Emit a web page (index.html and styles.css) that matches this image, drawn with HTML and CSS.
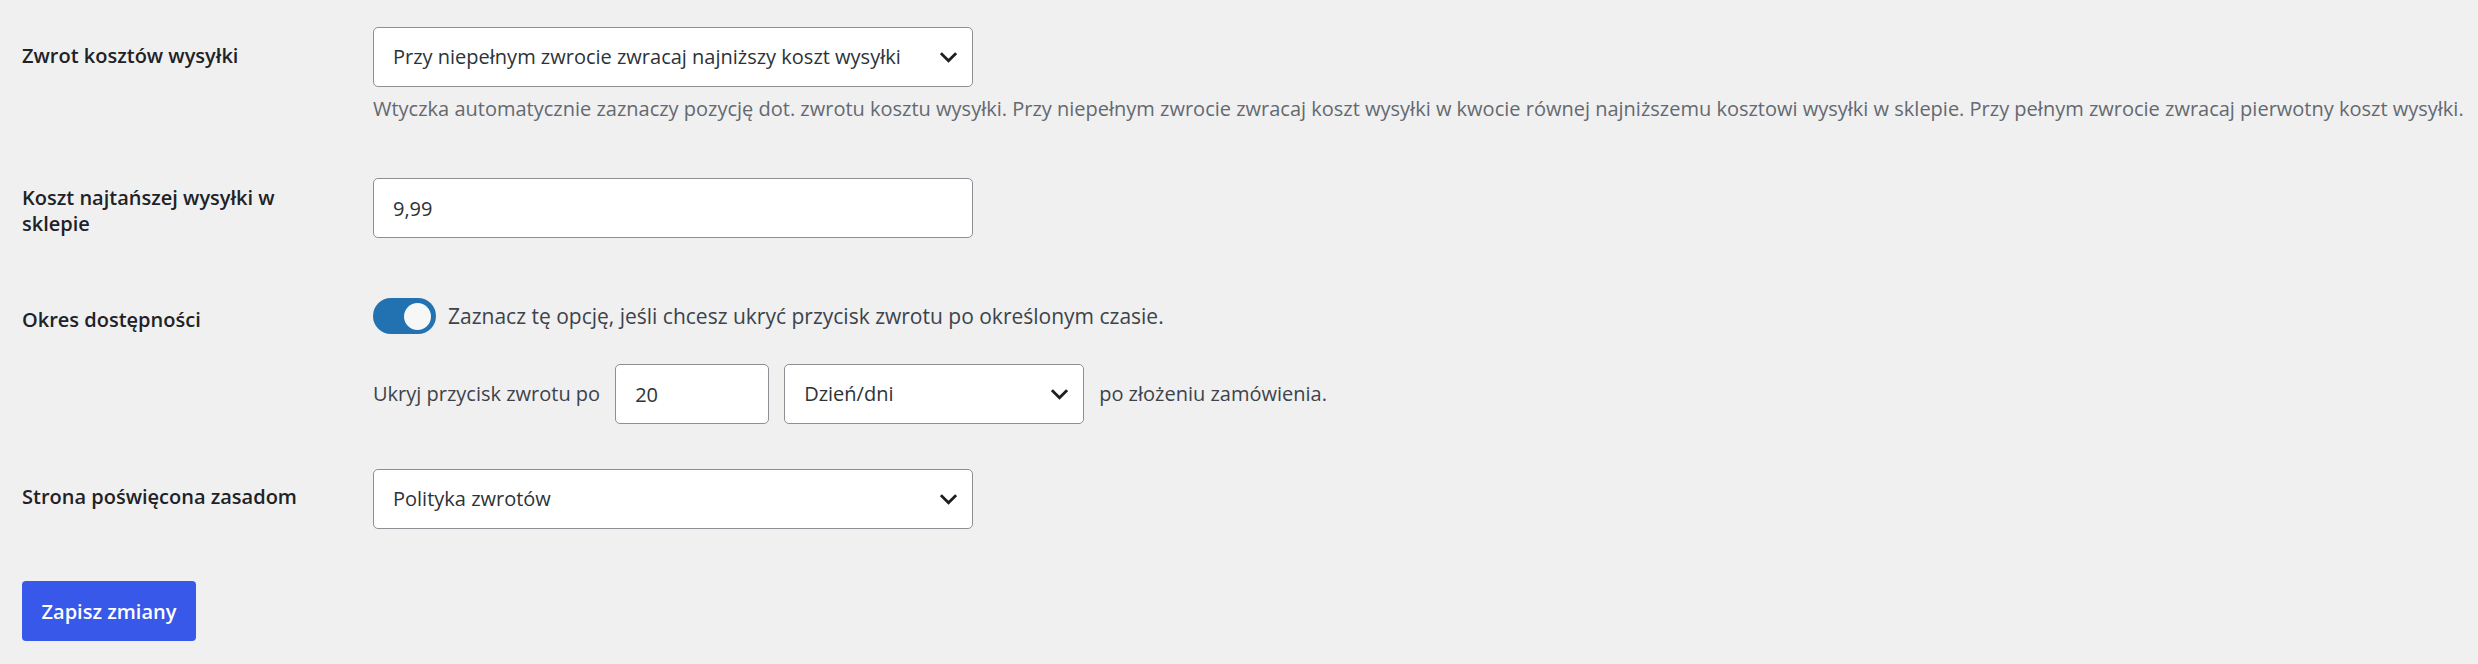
FILE: index.html
```html
<!DOCTYPE html>
<html lang="pl">
<head>
<meta charset="utf-8">
<title>Ustawienia zwrotów</title>
<link rel="stylesheet" href="styles.css">
</head>
<body>
<form class="settings">
  <div class="row row-shipping">
    <label class="label" for="refund-cost">Zwrot kosztów wysyłki</label>
    <div class="field">
      <div class="select-wrap select-wide">
        <select id="refund-cost" class="select">
          <option>Przy niepełnym zwrocie zwracaj najniższy koszt wysyłki</option>
        </select>
        <svg class="chevron" viewBox="0 0 18 11" aria-hidden="true"><polyline points="2,2 9,9 16,2"/></svg>
      </div>
      <p class="desc">Wtyczka automatycznie zaznaczy pozycję dot. zwrotu kosztu wysyłki. Przy niepełnym zwrocie zwracaj koszt wysyłki w kwocie równej najniższemu kosztowi wysyłki w sklepie. Przy pełnym zwrocie zwracaj pierwotny koszt wysyłki.</p>
    </div>
  </div>

  <div class="row row-cost">
    <label class="label label-cost" for="cheapest">Koszt najtańszej wysyłki w sklepie</label>
    <div class="field">
      <input id="cheapest" class="input input-wide" type="text" value="9,99">
    </div>
  </div>

  <div class="row row-period">
    <label class="label label-period" for="period">Okres dostępności</label>
    <div class="field">
      <div class="toggle-line">
        <span class="switch" role="switch" aria-checked="true" id="period"><span class="knob"></span></span>
        <span class="toggle-text">Zaznacz tę opcję, jeśli chcesz ukryć przycisk zwrotu po określonym czasie.</span>
      </div>
      <div class="period-line">
        <span class="inline-text">Ukryj przycisk zwrotu po</span>
        <input class="input input-num" type="text" value="20">
        <div class="select-wrap select-unit">
          <select class="select">
            <option>Dzień/dni</option>
          </select>
          <svg class="chevron" viewBox="0 0 18 11" aria-hidden="true"><polyline points="2,2 9,9 16,2"/></svg>
        </div>
        <span class="inline-text">po złożeniu zamówienia.</span>
      </div>
    </div>
  </div>

  <div class="row row-policy">
    <label class="label label-policy" for="policy">Strona poświęcona zasadom</label>
    <div class="field">
      <div class="select-wrap select-wide">
        <select id="policy" class="select">
          <option>Polityka zwrotów</option>
        </select>
        <svg class="chevron" viewBox="0 0 18 11" aria-hidden="true"><polyline points="2,2 9,9 16,2"/></svg>
      </div>
    </div>
  </div>

  <div class="actions">
    <button type="button" class="btn">Zapisz zmiany</button>
  </div>
</form>
</body>
</html>
```

FILE: styles.css
```css
html, body {
  margin: 0;
  padding: 0;
  background: #f0f0f1;
}

body {
  font-family: "Open Sans", "Noto Sans", "Liberation Sans", sans-serif;
  color: #1d2327;
}

.settings {
  padding: 0 0 0 22px;
}

.row {
  display: grid;
  grid-template-columns: 351px auto;
  align-items: start;
}

.row-shipping { padding-top: 27px; }
.row-cost { padding-top: 54px; }
.row-period { padding-top: 60px; }
.row-policy { padding-top: 45px; }

.label {
  display: block;
  width: 300px;
  padding-top: 16px;
  font-size: 20px;
  font-weight: 600;
  line-height: 26px;
  color: #1d2327;
}

.label-cost { padding-top: 7px; }
.label-period { padding-top: 9px; }
.label-policy { padding-top: 15px; }

.field {
  display: flex;
  flex-direction: column;
  align-items: flex-start;
}

.select-wrap {
  position: relative;
  height: 60px;
}

.select-wide { width: 600px; }
.select-unit { width: 300px; }

.select {
  -webkit-appearance: none;
  appearance: none;
  display: block;
  box-sizing: border-box;
  width: 100%;
  height: 60px;
  margin: 0;
  padding: 0 40px 0 19px;
  border: 1px solid #8c8f94;
  border-radius: 5px;
  background: #fff;
  font-family: inherit;
  font-size: 20px;
  color: #2c3338;
  line-height: 58px;
}

.chevron {
  position: absolute;
  right: 16px;
  top: 25px;
  width: 17px;
  height: 11px;
  fill: none;
  stroke: #1e1e1e;
  stroke-width: 3;
  stroke-linecap: square;
  pointer-events: none;
}

.desc {
  margin: 7px 0 0;
  font-size: 20px;
  line-height: 30px;
  color: #646970;
  white-space: nowrap;
}

.input {
  box-sizing: border-box;
  height: 60px;
  margin: 0;
  padding: 0 19px;
  border: 1px solid #8c8f94;
  border-radius: 5px;
  background: #fff;
  font-family: inherit;
  font-size: 20px;
  color: #2c3338;
}

.input-wide { width: 600px; }
.input-num { width: 154px; }

.toggle-line {
  display: flex;
  align-items: center;
  gap: 12px;
  height: 36px;
}

.switch {
  display: flex;
  justify-content: flex-end;
  align-items: center;
  box-sizing: border-box;
  width: 63px;
  height: 36px;
  padding: 0 5px;
  border-radius: 18px;
  background: #2271b1;
}

.knob {
  width: 27px;
  height: 27px;
  border-radius: 50%;
  background: #f6f7f7;
}

.toggle-text {
  font-size: 21px;
  line-height: 36px;
  color: #3c434a;
  white-space: nowrap;
}

.inline-text {
  font-size: 20px;
  line-height: 36px;
  color: #3c434a;
  white-space: nowrap;
}

.period-line {
  display: flex;
  align-items: center;
  gap: 15px;
  margin-top: 30px;
}

.actions {
  padding-top: 52px;
}

.btn {
  display: block;
  box-sizing: border-box;
  width: 174px;
  height: 60px;
  margin: 0;
  padding: 0;
  border: 0;
  border-radius: 4px;
  background: #3858e9;
  color: #fff;
  font-family: inherit;
  font-size: 20px;
  font-weight: 600;
  cursor: pointer;
}
```
